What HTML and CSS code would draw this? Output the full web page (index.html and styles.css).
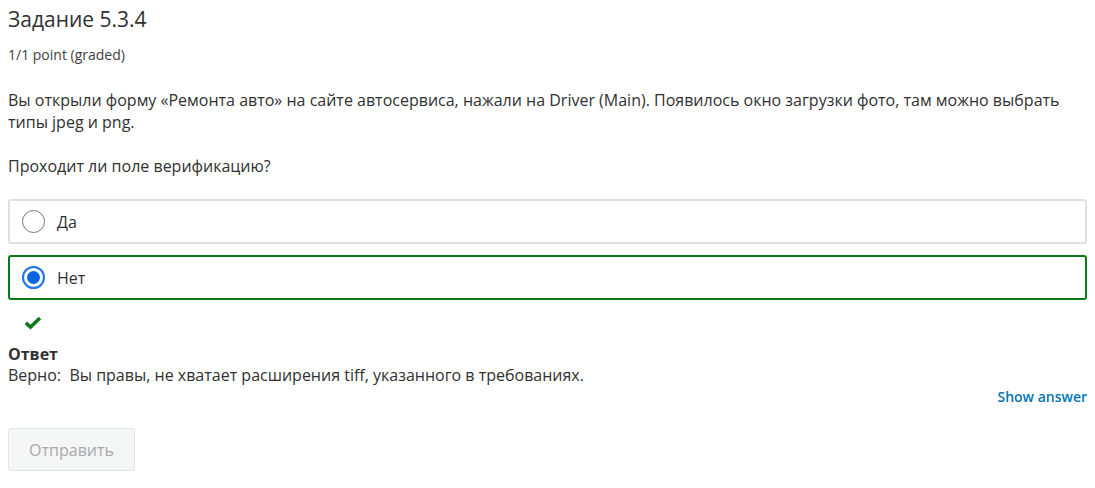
FILE: index.html
```html
<!DOCTYPE html>
<html lang="ru">
<head>
<meta charset="utf-8">
<link rel="stylesheet" href="styles.css">
</head>
<body>
<div class="problem">
  <h3 class="title">Задание 5.3.4</h3>
  <div class="points">1/1 point (graded)</div>
  <p class="text">Вы открыли форму «Ремонта авто» на сайте автосервиса, нажали на Driver (Main). Появилось окно загрузки фото, там можно выбрать типы jpeg и png.</p>
  <p class="text q">Проходит ли поле верификацию?</p>
  <div class="choices">
    <label class="choice"><span class="radio"></span><span class="label">Да</span></label>
    <label class="choice correct"><span class="radio checked"></span><span class="label">Нет</span></label>
  </div>
  <div class="status">
    <svg width="18" height="14" viewBox="0 0 18 14"><path d="M1.8 6.8 L6.5 11 L16 2" fill="none" stroke="#0a7a18" stroke-width="3.6" stroke-linejoin="miter"/></svg>
  </div>
  <div class="answer">
    <div class="answer-title">Ответ</div>
    <div class="answer-text">Верно:&nbsp; Вы правы, не хватает расширения tiff, указанного в требованиях.</div>
  </div>
  <div class="actions-top"><a class="show">Show answer</a></div>
  <div class="actions"><button class="submit">Отправить</button></div>
</div>
</body>
</html>
```
FILE: styles.css
```css
* { box-sizing: border-box; }
body {
  margin: 0;
  padding: 0 8px;
  font-family: "Open Sans", "Noto Sans", sans-serif;
  color: #313131;
  background: #fff;
}
.title {
  margin: 0;
  padding-top: 5px;
  font-size: 21px;
  font-weight: 400;
  line-height: 28px;
  color: #313131;
}
.points {
  margin-top: 13px;
  font-size: 14px;
  line-height: 18px;
  color: #414141;
}
.text {
  margin: 0;
  margin-top: 25px;
  font-size: 16px;
  line-height: 22px;
  color: #313131;
}
.text.q { margin-top: 22px; }
.choices {
  margin-top: 22px;
  display: flex;
  flex-direction: column;
  gap: 11px;
}
.choice {
  display: flex;
  align-items: center;
  height: 45px;
  border: 2px solid #e0e0e0;
  border-radius: 3px;
  padding-left: 12px;
  font-size: 16px;
}
.choice.correct { border-color: #0a7a18; }
.radio {
  width: 23px;
  height: 23px;
  border-radius: 50%;
  border: 1px solid #767676;
  background: #fff;
  margin-right: 12px;
  position: relative;
}
.radio.checked {
  border: 2px solid #1a73e8;
  background: #fff;
}
.radio.checked::after {
  content: "";
  position: absolute;
  left: 3px; top: 3px;
  width: 13px; height: 13px;
  border-radius: 50%;
  background: #0a66e0;
}
.status {
  margin-top: 16px;
  padding-left: 16px;
  height: 14px;
  display: flex;
}
.answer { margin-top: 14px; font-size: 16px; line-height: 21px; }
.answer-title { font-weight: 700; color: #313131; }
.answer-text { color: #313131; }
.actions-top {
  display: flex;
  justify-content: flex-end;
  margin-top: 1px;
}
.show {
  font-size: 14px;
  line-height: 20px;
  color: #0075b4;
  font-weight: 600;
}
.actions { margin-top: 21px; }
.submit {
  font-family: "Open Sans", "Noto Sans", sans-serif;
  width: 127px;
  height: 43px;
  border: 1px solid #e4e4e4;
  border-radius: 3px;
  background: #f5f6f6;
  color: #a9a9a9;
  font-size: 16px;
}
```
